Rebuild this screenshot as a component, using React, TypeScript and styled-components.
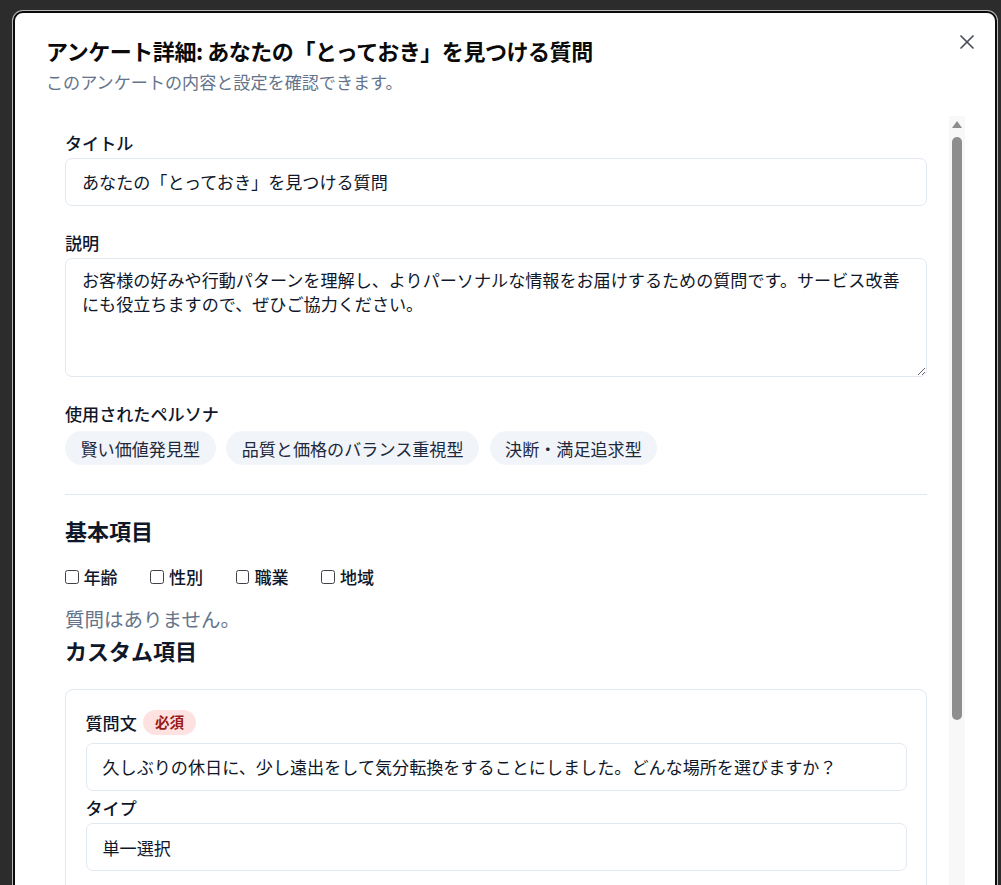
import React from "react";
import styled, { createGlobalStyle } from "styled-components";
import { X } from "lucide-react";

const GlobalStyle = createGlobalStyle`
  html, body {
    margin: 0;
    padding: 0;
    height: 100%;
    overflow: hidden;
    background: #2c2c2c;
  }
  body {
    font-family: "Noto Sans CJK JP", "Noto Sans", sans-serif;
    color: #0f172a;
  }
  *, *::before, *::after { box-sizing: border-box; }
`;

const Backdrop = styled.div`
  height: 885px;
  overflow: hidden;
  padding: 11px 0 0 13px;
`;

const Dialog = styled.div`
  position: relative;
  width: 984px;
  background: #ffffff;
  border: 2px solid #0b0b0b;
  border-radius: 10px;
  box-shadow: 0 0 0 1px #b9b9b9;
  padding: 26px 30px 26px 31px;
  display: flex;
  flex-direction: column;
`;

const CloseButton = styled.button`
  position: absolute;
  top: 17px;
  right: 16px;
  width: 24px;
  height: 24px;
  padding: 0;
  border: none;
  background: transparent;
  color: #4b5058;
  display: flex;
  align-items: center;
  justify-content: center;
  cursor: pointer;
`;

const Header = styled.div`
  display: flex;
  flex-direction: column;
  gap: 8.8px;
`;

const Title = styled.h2`
  margin: 0;
  font-size: 22px;
  line-height: 1;
  font-weight: 700;
  letter-spacing: -0.45px;
  color: #0a0a0a;
`;

const Subtitle = styled.p`
  margin: 0;
  font-size: 17.1px;
  line-height: 24.4px;
  color: #64748b;
`;

const ScrollFrame = styled.div`
  margin-top: 22px;
  height: 812px;
  display: flex;
`;

const ScrollContent = styled.div`
  flex: 1;
  min-width: 0;
  overflow: hidden;
  padding: 17.5px 22px 0 19px;
  display: flex;
  flex-direction: column;
`;

const ScrollTrack = styled.div`
  width: 16px;
  flex: none;
  background: #f8f8f8;
  display: flex;
  flex-direction: column;
  align-items: center;
`;

const ScrollArrow = styled.span`
  margin-top: 5px;
  width: 0;
  height: 0;
  border-left: 5.5px solid transparent;
  border-right: 5.5px solid transparent;
  border-bottom: 7px solid #8e8e8e;
`;

const ScrollThumb = styled.span`
  margin-top: 9px;
  width: 10px;
  border-radius: 5px;
  background: #8e8e8e;
`;

const Field = styled.div<{ $mt?: number }>`
  display: flex;
  flex-direction: column;
  gap: 7px;
  margin-top: ${(p) => p.$mt ?? 0}px;
`;

const Label = styled.label`
  font-size: 17.1px;
  line-height: 1;
  font-weight: 500;
  color: #0f172a;
`;

const TextInput = styled.input`
  width: 100%;
  height: 48px;
  padding: 0 16px;
  border: 1px solid #e2e8f0;
  border-radius: 7px;
  background: #ffffff;
  font-family: inherit;
  font-size: 17.1px;
  color: #0f172a;
  outline: none;
`;

const TextArea = styled.textarea`
  width: 100%;
  height: 119.5px;
  padding: 9px 16px;
  border: 1px solid #e2e8f0;
  border-radius: 7px;
  background: #ffffff;
  font-family: inherit;
  font-size: 17.1px;
  line-height: 24.5px;
  color: #0f172a;
  resize: vertical;
  outline: none;
  display: block;
`;

const PillRow = styled.div`
  display: flex;
  flex-wrap: wrap;
  gap: 10.5px;
  margin-top: 2px;
`;

const Pill = styled.span`
  display: inline-flex;
  align-items: center;
  height: 33.5px;
  padding: 0 15.5px;
  border-radius: 999px;
  background: #f1f5f9;
  font-size: 17.1px;
  line-height: 1;
  font-weight: 400;
  color: #1e293b;
`;

const BasicSection = styled.section`
  margin-top: 29.4px;
  border-top: 1px solid #e2e8f0;
  padding-top: 23.5px;
  display: flex;
  flex-direction: column;
`;

const SectionHeading = styled.h3<{ $mt?: number }>`
  margin: ${(p) => p.$mt ?? 0}px 0 0;
  font-size: 22px;
  line-height: 1;
  font-weight: 700;
  color: #0f172a;
`;

const CheckRow = styled.div`
  margin-top: 26px;
  display: flex;
  align-items: center;
  gap: 32.8px;
`;

const CheckItem = styled.label`
  display: inline-flex;
  align-items: center;
  gap: 5px;
  font-size: 17.1px;
  line-height: 20.5px;
  font-weight: 500;
  color: #0f172a;
`;

const CheckBox = styled.input`
  appearance: none;
  -webkit-appearance: none;
  margin: 0;
  width: 13.5px;
  height: 13.5px;
  border: 1.2px solid #3f3f46;
  border-radius: 2.5px;
  background: #ffffff;
`;

const EmptyNote = styled.p`
  margin: 21.3px 0 0;
  font-size: 19.5px;
  line-height: 1;
  color: #64748b;
`;

const QuestionCard = styled.div`
  margin-top: 28.5px;
  border: 1px solid #e2e8f0;
  border-radius: 8px;
  padding: 19.5px;
  display: flex;
  flex-direction: column;
  gap: 7.8px;
`;

const LabelRow = styled.div`
  display: flex;
  align-items: center;
  gap: 6px;
  height: 25px;
`;

const RequiredBadge = styled.span`
  display: inline-flex;
  align-items: center;
  height: 25px;
  padding: 0 12.2px;
  border-radius: 999px;
  background: #fee2e2;
  color: #991b1b;
  font-size: 14.6px;
  line-height: 1;
  font-weight: 700;
`;

const personas = ["賢い価値発見型", "品質と価格のバランス重視型", "決断・満足追求型"];
const basicItems = ["年齢", "性別", "職業", "地域"];

export default function App() {
  return (
    <>
      <GlobalStyle />
      <Backdrop>
        <Dialog role="dialog">
          <CloseButton aria-label="閉じる">
            <X size={24} strokeWidth={1.7} />
          </CloseButton>
          <Header>
            <Title>アンケート詳細: あなたの「とっておき」を見つける質問</Title>
            <Subtitle>このアンケートの内容と設定を確認できます。</Subtitle>
          </Header>
          <ScrollFrame>
            <ScrollContent>
              <Field>
                <Label>タイトル</Label>
                <TextInput readOnly value="あなたの「とっておき」を見つける質問" />
              </Field>
              <Field $mt={28}>
                <Label>説明</Label>
                <TextArea
                  readOnly
                  value="お客様の好みや行動パターンを理解し、よりパーソナルな情報をお届けするための質問です。サービス改善にも役立ちますので、ぜひご協力ください。"
                />
              </Field>
              <Field $mt={28}>
                <Label>使用されたペルソナ</Label>
                <PillRow>
                  {personas.map((p) => (
                    <Pill key={p}>{p}</Pill>
                  ))}
                </PillRow>
              </Field>
              <BasicSection>
                <SectionHeading>基本項目</SectionHeading>
                <CheckRow>
                  {basicItems.map((item) => (
                    <CheckItem key={item}>
                      <CheckBox type="checkbox" readOnly />
                      {item}
                    </CheckItem>
                  ))}
                </CheckRow>
                <EmptyNote>質問はありません。</EmptyNote>
              </BasicSection>
              <SectionHeading $mt={10.8}>カスタム項目</SectionHeading>
              <QuestionCard>
                <LabelRow>
                  <Label>質問文</Label>
                  <RequiredBadge>必須</RequiredBadge>
                </LabelRow>
                <TextInput
                  readOnly
                  value="久しぶりの休日に、少し遠出をして気分転換をすることにしました。どんな場所を選びますか？"
                />
                <Label>タイプ</Label>
                <TextInput readOnly value="単一選択" />
              </QuestionCard>
            </ScrollContent>
            <ScrollTrack aria-hidden="true">
              <ScrollArrow />
              <ScrollThumb style={{ height: 583 }} />
            </ScrollTrack>
          </ScrollFrame>
        </Dialog>
      </Backdrop>
    </>
  );
}
